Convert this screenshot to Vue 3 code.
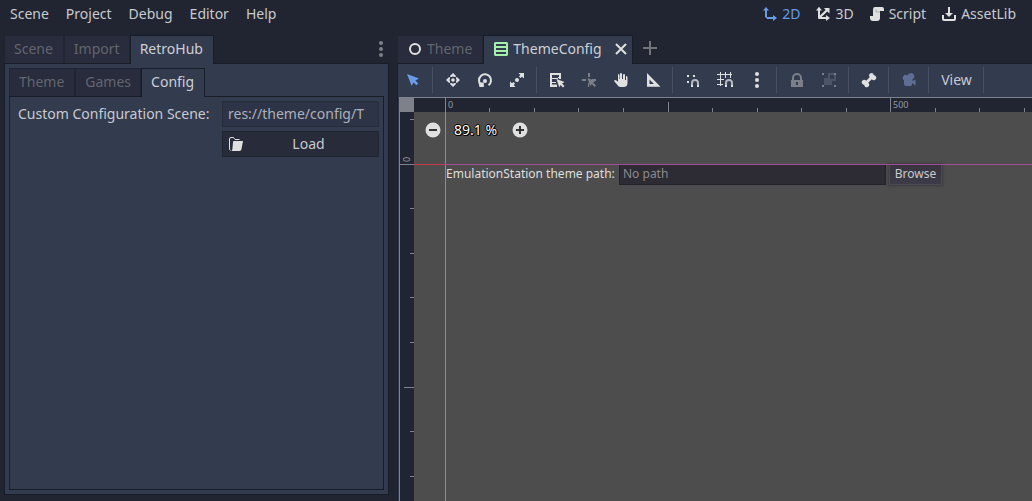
<script setup>
import { computed, onBeforeUnmount, onMounted, ref } from 'vue'

const menus = ['Scene', 'Project', 'Debug', 'Editor', 'Help']
const dockTabs = ['Scene', 'Import', 'RetroHub']
const innerTabs = ['Theme', 'Games', 'Config']
const scenePath = ref('res://theme/config/T')
const themePath = ref('')

const origin = { x: 45, y: 66 }
const minor = 44.55
const viewport = ref(null)
const size = ref({ w: 0, h: 0 })

function ticks(start, first, length) {
  const list = []
  for (let i = first; start + i * minor < length; i++) {
    list.push({
      at: Math.floor(start + i * minor + 0.3),
      size: i % 10 === 0 ? 14 : i % 5 === 0 ? 10 : 4,
      label: i % 10 === 0 ? String(i * 50) : ''
    })
  }
  return list
}
const topTicks = computed(() => ticks(origin.x, 0, size.value.w))
const leftTicks = computed(() => ticks(origin.y, -1, size.value.h))

let observer
function measure() {
  size.value = { w: viewport.value.clientWidth, h: viewport.value.clientHeight }
}
onMounted(() => {
  measure()
  observer = new ResizeObserver(measure)
  observer.observe(viewport.value)
})
onBeforeUnmount(() => observer.disconnect())

const toolGroups = [
  [{
    name: 'Select', tone: 'blue',
    art: '<path d="M2 2 14 6.600 10.400 8.600 13.200 11.600 11.400 13.200 8.600 10.400 6.600 13.800Z"/>'
  }],
  [{
    name: 'Move',
    art: '<circle cx="8" cy="8" r="1.800"/><path d="M8 1 10.800 3.800V5H9.500Q8 4 6.500 5H5.200V3.800ZM8 15 10.800 12.200V11H9.500Q8 12 6.500 11H5.200V12.200ZM1 8 3.800 5.200H5V6.500Q4 8 5 9.500V10.800H3.800ZM15 8 12.200 5.200H11V6.500Q12 8 11 9.500V10.800H12.200Z"/>'
  }, {
    name: 'Rotate',
    art: '<circle cx="8" cy="9" r="2"/><path d="M4 12.800A6 6 0 1 1 11.500 13.200" fill="none" stroke="currentColor" stroke-width="2"/><path d="M1.500 10.500H6.800V15H2.500Z"/>'
  }, {
    name: 'Scale',
    art: '<circle cx="8" cy="8" r="2"/><path d="M9.500 1H15V6.500L13 4.700 11.500 6 10 4.500 11.300 3ZM6.500 15H1V9.500L3 11.300 4.500 10 6 11.500 4.700 13Z"/>'
  }],
  [{
    name: 'List select',
    art: '<path fill-rule="evenodd" d="M1 1H12V7H10V3H3V5H9V7H3V9H7V11H3V12.500H8V15H1ZM3 5H10V6H3ZM3 9H7V10H3Z"/><path d="M7.500 7 15.500 10 13 11.500 15.500 14 14 15.500 11.600 13 10.200 15.200Z"/>'
  }, {
    name: 'Pivot', tone: 'dim',
    art: '<path d="M7 1H9V5H7ZM1 7H5V9H1ZM11 7H15V9H11ZM7 11H8V15H7Z"/><path d="M6.500 6 14.500 9 12 10.500 15 13.500 13.500 15 10.800 12 9.200 14.200Z"/>'
  }, {
    name: 'Pan',
    art: '<path d="M8 1Q9 1 9 2V7H10V3Q10 2 11 2T12 3V8H13V5Q13 4 13.500 4T14.500 5V11Q14.500 15 10.500 15H7.500Q5.500 15 4 12.500L1.200 9.200Q.9 8.200 2 8 3 7.800 5 9.700V3Q5 2 5.500 2T6.500 3V7H7V2Q7 1 8 1Z"/>'
  }, {
    name: 'Ruler',
    art: '<path fill-rule="evenodd" d="M2 1 15.500 14.700H2ZM4.500 7.500V12H9Z"/>'
  }],
  [{
    name: 'Smart snap',
    art: '<path d="M2 3H4V5H2ZM8 3H10V5H8ZM2 9H4V11H2Z"/><path d="M7 15V11A3 3 0 0 1 13 11V15" fill="none" stroke="#b4b7c0" stroke-width="2"/><path d="M6 13H8V15H6ZM12 13H14V15H12Z"/>'
  }, {
    name: 'Grid snap',
    art: '<path d="M3 0H4V14H3ZM8 0H9V6H8ZM13 0H14V6H13ZM0 2H15V3H0ZM0 7H7V8H0ZM0 12H6V13H0Z"/><path d="M9 15V11A3 3 0 0 1 15 11V15" fill="none" stroke="#b4b7c0" stroke-width="2"/><path d="M8 13H10V15H8ZM14 13H16V15H14Z"/>'
  }, {
    name: 'Snap options',
    art: '<circle cx="8" cy="2" r="2"/><circle cx="8" cy="8" r="2"/><circle cx="8" cy="14" r="2"/>'
  }],
  [{
    name: 'Lock', tone: 'dim',
    art: '<path fill-rule="evenodd" d="M8 1A5 5 0 0 0 3 6V8H2V15H14V8H13V6A5 5 0 0 0 8 1ZM8 3A3 3 0 0 1 11 6V8H5V6A3 3 0 0 1 8 3ZM7 10H9V13H7Z"/>'
  }, {
    name: 'Group', tone: 'dim',
    art: '<path d="M1 1H3V3H1ZM13 1H15V3H13ZM1 13H3V15H1ZM13 13H15V15H13Z"/><path fill="#4e5467" d="M3 6H7V9H11V13H3Z"/><path fill="#4e5467" fill-rule="evenodd" d="M7 1H13V3H15V9H7ZM9 3V7H13V3Z"/>'
  }],
  [{
    name: 'Skeleton',
    art: '<path d="M10.500 1A2.500 2.500 0 0 0 8.700 5.200L5.200 8.800A2.500 2.500 0 1 0 3.200 12.800 2.500 2.500 0 1 0 7.200 10.800L10.800 7.200A2.500 2.500 0 1 0 12.800 3.200 2.400 2.400 0 0 0 10.500 1Z"/>'
  }],
  [{
    name: 'Camera override', tone: 'camera',
    art: '<path d="M9 1.500A3 3 0 0 0 6.300 3.500 2.800 2.800 0 1 0 3 8.300V12Q3 14 5 14H10Q11 14 11 12V11L14.500 13.500V7.500L11.500 9V7A3 3 0 0 0 9 1.500Z"/>'
  }]
]
</script>

<template>
  <div class="editor">
    <header class="menubar">
      <nav class="menus">
        <button v-for="m in menus" :key="m">{{ m }}</button>
      </nav>
      <nav class="modes">
        <button class="current">
          <svg class="icon" viewBox="0 0 16 16"><path d="M4 1 7 4.500H5V11H11V9L15 12 11 15V13H5V12.500L3 11V4.500H1Z" /></svg>
          <span>2D</span>
        </button>
        <button>
          <svg class="icon" viewBox="0 0 16 16"><path d="M4 .8 7 4.500H5V9.600L10.600 4 9 2H14.500V7.500L12.300 5.400 6.500 11H11V9L15 12 11 15V13H4Q3 13 3 12V4.500H1Z" /></svg>
          <span>3D</span>
        </button>
        <button>
          <svg class="icon" viewBox="0 0 16 16"><path d="M6 1H13Q15 1 15 3V5H11V12Q11 15 8 15H4Q1 15 1 12V10H4V4Q4 1 6 1Z" /><path d="M7 3.500V6H11" fill="none" stroke="#a9abb1" stroke-width="1" /></svg>
          <span>Script</span>
        </button>
        <button>
          <svg class="icon" viewBox="0 0 16 16"><path d="M7 1H9V7H12L8 11 4 7H7ZM1 9H3V13H13V9H15V13Q15 15 13 15H3Q1 15 1 13Z" /></svg>
          <span>AssetLib</span>
        </button>
      </nav>
    </header>

    <main class="workspace">
      <section class="dock">
        <div class="tabs">
          <button v-for="t in dockTabs" :key="t" class="tab" :class="{ active: t === 'RetroHub' }">{{ t }}</button>
          <button class="dots" aria-label="Dock options">
            <svg class="icon" viewBox="0 0 16 16"><circle cx="8" cy="2" r="2" /><circle cx="8" cy="8" r="2" /><circle cx="8" cy="14" r="2" /></svg>
          </button>
        </div>
        <div class="panel outer">
          <div class="tabs">
            <button v-for="t in innerTabs" :key="t" class="tab" :class="{ active: t === 'Config' }">{{ t }}</button>
          </div>
          <div class="panel inner">
            <form class="config" @submit.prevent>
              <label for="scene-path">Custom Configuration Scene:</label>
              <input id="scene-path" v-model="scenePath" class="field" type="text">
              <button class="load" type="button">
                <svg class="icon" viewBox="0 0 16 16"><path d="M2.500 14.500Q1.500 14.500 1.500 12V3Q1.500 1.500 3 1.500H5.500L7 3.500H11.500" fill="none" stroke="currentColor" stroke-width="1" /><path d="M5.500 5H15L13.500 13Q13.200 15 11.500 15H3.500Q4.500 14 4.500 12L5 6Z" /></svg>
                <span>Load</span>
              </button>
            </form>
          </div>
        </div>
      </section>

      <section class="stage">
        <div class="tabs">
          <button class="tab file">
            <svg class="icon" viewBox="0 0 16 16"><circle cx="8" cy="8" r="5" fill="none" stroke="currentColor" stroke-width="2" /></svg>
            <span>Theme</span>
          </button>
          <div class="tab file active">
            <svg class="icon green" viewBox="0 0 16 16"><path fill-rule="evenodd" d="M2 1H14L15 2V14L14 15H2L1 14V2ZM3 3V5H13V3ZM3 7V9H13V7ZM3 11V13H13V11Z" /></svg>
            <span>ThemeConfig</span>
            <button class="close" aria-label="Close tab">
              <svg class="icon" viewBox="0 0 16 16"><path d="M3 3 13 13M13 3 3 13" fill="none" stroke="currentColor" stroke-width="2" /></svg>
            </button>
          </div>
          <button class="add" aria-label="New scene">
            <svg class="icon" viewBox="0 0 16 16"><path d="M7 1H9V7H15V9H9V15H7V9H1V7H7Z" /></svg>
          </button>
        </div>

        <div class="body">
          <div class="toolbar">
            <template v-for="(group, g) in toolGroups" :key="g">
              <button v-for="tool in group" :key="tool.name" class="tool" :class="tool.tone" :aria-label="tool.name">
                <svg class="icon" viewBox="0 0 16 16" v-html="tool.art"></svg>
              </button>
              <i class="sep"></i>
            </template>
            <button class="view">View</button>
            <i class="sep"></i>
          </div>

          <div ref="viewport" class="viewport">
            <div class="canvas"></div>
            <svg class="guides">
              <rect class="corner" width="14" height="14" />
              <g class="ticks">
                <rect v-for="t in topTicks" :key="'x' + t.at" :x="t.at" :y="14 - t.size" width="1" :height="t.size" />
                <rect v-for="t in leftTicks" :key="'y' + t.at" :x="14 - t.size" :y="t.at" :width="t.size" height="1" />
              </g>
              <template v-for="t in topTicks" :key="'l' + t.at">
                <text v-if="t.label" :x="t.at + 3" y="10">{{ t.label }}</text>
              </template>
              <template v-for="t in leftTicks" :key="'m' + t.at">
                <text v-if="t.label" :transform="`translate(10 ${t.at - 2}) rotate(-90)`">{{ t.label }}</text>
              </template>
              <rect class="red" x="14" y="66" width="31" height="1" />
              <rect class="green-line" x="45" y="14" width="1" height="52" />
              <rect class="pale-line" x="45" y="67" width="1" height="100%" />
            </svg>

            <div class="zoom">
              <button aria-label="Zoom out">
                <svg class="icon" viewBox="0 0 16 16"><circle cx="8" cy="8" r="7.500" /><path d="M4 7H12V9H4Z" fill="#333" /></svg>
              </button>
              <span>89.1 %</span>
              <button aria-label="Zoom in">
                <svg class="icon" viewBox="0 0 16 16"><circle cx="8" cy="8" r="7.500" /><path d="M7 4H9V7H12V9H9V12H7V9H4V7H7Z" fill="#333" /></svg>
              </button>
            </div>

            <form class="preview" @submit.prevent>
              <label for="theme-path">EmulationStation theme path:</label>
              <input id="theme-path" v-model="themePath" type="text" placeholder="No path">
              <button type="button">Browse</button>
            </form>
            <div class="purple"></div>
          </div>
        </div>
      </section>
    </main>
  </div>
</template>

<style>
body {
  background: #212531;
}
</style>

<style scoped>
.editor {
  box-sizing: border-box;
  height: 100vh;
  display: flex;
  flex-direction: column;
  background: #212531;
  color: #c8cacf;
  font: 14px/20px "Noto Sans", sans-serif;
  overflow: hidden;
}
.editor * {
  box-sizing: border-box;
}
button,
input {
  margin: 0;
  padding: 0;
  border: 0;
  border-radius: 0;
  background: none;
  color: inherit;
  font: inherit;
  outline: none;
}
.icon {
  display: block;
  flex: none;
  width: 16px;
  height: 16px;
  fill: currentColor;
  color: #e0e0e0;
}
.menubar {
  flex: none;
  height: 35px;
  padding: 4px 16px 0 10px;
  display: flex;
  align-items: flex-start;
  justify-content: space-between;
}
.menus,
.modes {
  display: flex;
  gap: 17px;
}
.modes {
  gap: 15px;
}
.modes button {
  display: flex;
  align-items: center;
  gap: 4px;
}
.modes .current,
.modes .current .icon {
  color: #699ce8;
}
.workspace {
  flex: 1;
  min-height: 0;
  display: flex;
  gap: 8px;
  padding-left: 4px;
}
.dock {
  flex: none;
  width: 385px;
  padding-bottom: 6px;
  display: flex;
  flex-direction: column;
}
.tabs {
  position: relative;
  z-index: 1;
  flex: none;
  display: flex;
  height: 29px;
  margin-bottom: -1px;
}
.tab {
  height: 28px;
  padding: 0 9px 2px;
  border: 1px solid #212531;
  border-bottom: 0;
  background: #282c3c;
  color: #62656f;
  white-space: nowrap;
}
.tab:first-child {
  padding-right: 10px;
}
.tab.active {
  height: 29px;
  padding-right: 10px;
  padding-bottom: 3px;
  border-color: #191d27;
  background: #333b4f;
  color: #cdcfd4;
}
.dots {
  margin-left: auto;
  padding-bottom: 2px;
}
.dots .icon {
  color: #7c7f88;
}
.panel {
  flex: 1;
  min-height: 0;
  border: 1px solid #191d27;
  background: #333b4f;
}
.outer {
  padding: 4px;
  display: flex;
  flex-direction: column;
}
.inner {
  padding: 4px;
}
.config {
  display: grid;
  grid-template-columns: 1fr 157px;
  gap: 4px 8px;
}
.config label {
  padding-left: 4px;
  line-height: 26px;
  white-space: nowrap;
}
.field {
  width: 100%;
  height: 26px;
  padding: 0 5px 1px;
  border: 1px solid #262b3a;
  background: #2e3447;
  color: #adb0b8;
}
.load {
  grid-column: 2;
  height: 26px;
  padding: 0 5px;
  border: 1px solid #202431;
  background: #272b3a;
  display: flex;
  align-items: center;
}
.load span {
  flex: 1;
}
.stage {
  flex: 1;
  min-width: 0;
  display: flex;
  flex-direction: column;
}
.file {
  display: flex;
  align-items: center;
  gap: 4px;
}
.tab.file.active {
  padding-right: 3px;
}
.icon.green {
  color: #a5efac;
}
.close {
  margin-left: 7px;
}
.add {
  width: 34px;
  display: flex;
  align-items: center;
  justify-content: center;
  padding-bottom: 3px;
}
.add .icon {
  color: #727475;
}
.body {
  flex: 1;
  min-height: 0;
  display: flex;
  flex-direction: column;
  border: 1px solid #191d27;
  border-width: 1px 0 0 1px;
  background: #333b4f;
  padding-left: 1px;
}
.toolbar {
  flex: none;
  height: 33px;
  padding-bottom: 1px;
  display: flex;
  align-items: center;
  gap: 4px;
}
.tool {
  flex: none;
  width: 28px;
  height: 28px;
  padding: 0 6px;
}
.tool.blue .icon {
  color: #699ce8;
}
.tool.dim .icon {
  color: #7c7f88;
}
.tool.camera .icon {
  color: #5f6d95;
}
.sep {
  flex: none;
  width: 4px;
  height: 26px;
  border-left: 1px solid #333b4f;
  background: linear-gradient(90deg, #484f61 1px, transparent 1px);
}
.view {
  width: 43px;
  text-align: center;
}
.viewport {
  position: relative;
  flex: 1;
  min-height: 0;
  border: 1px solid #7e838e;
  border-width: 1px 0 0 1px;
  background: #212531;
  padding: 14px 0 0 14px;
  overflow: hidden;
}
.canvas {
  height: 100%;
  background: #4d4d4d;
}
.guides {
  position: absolute;
  inset: 0;
  width: 100%;
  height: 100%;
}
.guides text {
  fill: #9699a1;
  font-size: 9px;
  line-height: 12px;
}
.ticks {
  fill: #7e838e;
}
.corner {
  fill: #7e8189;
}
.red {
  fill: #c7394a;
}
.green-line {
  fill: #7daa25;
}
.pale-line {
  fill: #7b9b7f;
}
.purple {
  position: absolute;
  top: 66px;
  left: 45px;
  right: 0;
  height: 1px;
  background: #a64a9c;
}
.zoom {
  position: absolute;
  top: 22px;
  left: 25px;
  display: flex;
  align-items: center;
  gap: 13px;
  color: #fff;
}
.zoom span {
  width: 45px;
  white-space: nowrap;
  text-shadow: 1px 0 #000, -1px 0 #000, 0 1px #000, 0 -1px #000, 1px 1px #000;
}
.preview {
  position: absolute;
  top: 66px;
  left: 46px;
  display: flex;
  align-items: center;
  gap: 3px;
  color: #dedede;
  font-size: 12px;
  line-height: 18px;
}
.preview label {
  width: 170px;
  padding-bottom: 2px;
  white-space: nowrap;
}
.preview input {
  width: 267px;
  height: 21px;
  padding: 0 3px 2px;
  border: 1px solid #242228;
  background: #2d2b33;
}
.preview input::placeholder {
  color: #8b8a8e;
  opacity: 1;
}
.preview button {
  width: 53px;
  height: 21px;
  padding-bottom: 2px;
  border: 1px solid #4b4956;
  background: linear-gradient(#36343f, #3d3b47);
  box-shadow: 0 0 2px 1px #3b3b3f;
  color: #c9c9cb;
}
</style>
